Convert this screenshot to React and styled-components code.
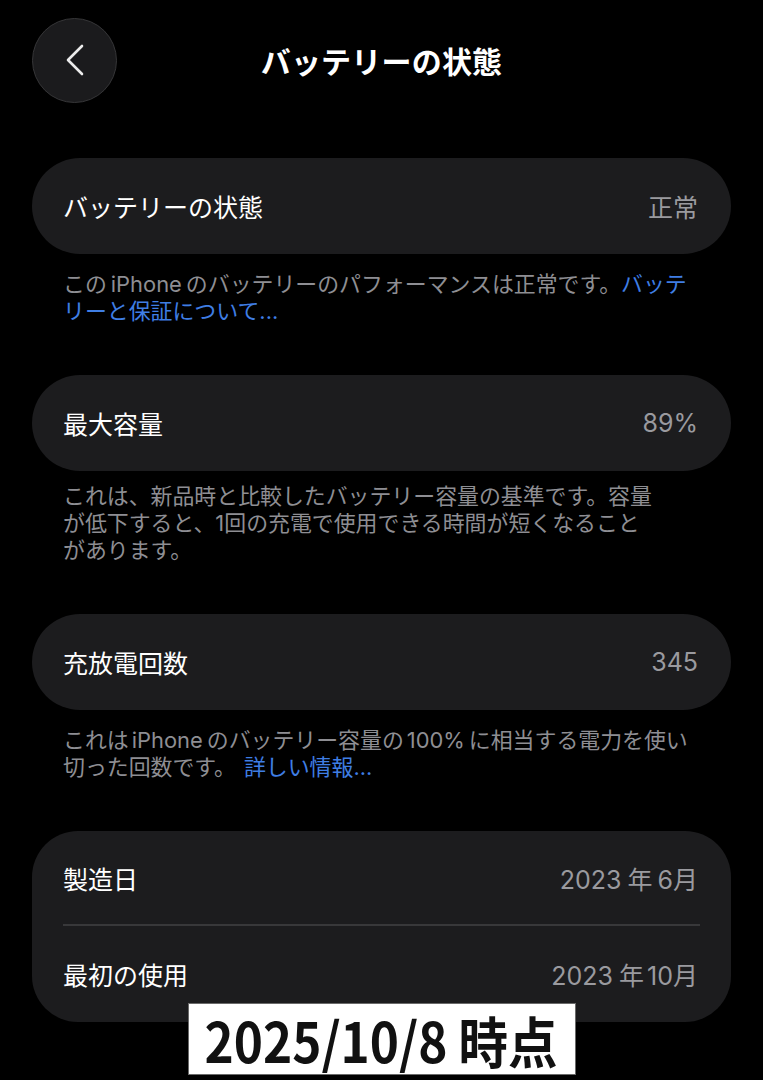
import React from "react";
import styled, { createGlobalStyle } from "styled-components";

const GlobalStyle = createGlobalStyle`
  html, body {
    margin: 0;
    padding: 0;
    background: #000;
  }
  body {
    font-family: "Inter", "Noto Sans CJK JP", sans-serif;
    -webkit-font-smoothing: antialiased;
  }
  * { box-sizing: border-box; }
`;

const Page = styled.div`
  width: 763px;
  min-height: 1080px;
  background: #000;
  padding: 17px 32px 0;
  display: flex;
  flex-direction: column;
`;

const Header = styled.header`
  display: grid;
  grid-template-columns: 85px 1fr 85px;
  align-items: center;
  height: 86px;
  margin-bottom: 55px;
`;

const BackButton = styled.button`
  width: 85px;
  height: 85px;
  border-radius: 50%;
  background: #1b1b1d;
  border: 1.5px solid #363638;
  display: flex;
  align-items: center;
  justify-content: center;
  padding: 0;
  cursor: pointer;
`;

const Title = styled.h1`
  margin: 0;
  text-align: center;
  color: #fff;
  font-family: "Noto Sans CJK JP", sans-serif;
  font-size: 30px;
  font-weight: 700;
  letter-spacing: 0.2px;
`;

const Group = styled.section`
  display: flex;
  flex-direction: column;
  margin-bottom: 50px;
  position: relative;
`;

const Card = styled.div`
  background: #1c1c1e;
  border-radius: ${(p) => (p.$multi ? "46px" : "48px")};
  display: flex;
  flex-direction: column;
  padding: 0 31px;
`;

const Row = styled.div`
  height: ${(p) => p.$h || 96}px;
  display: flex;
  align-items: center;
  justify-content: space-between;
  border-bottom: ${(p) => (p.$divider ? "2px solid #38383a" : "none")};
`;

const Label = styled.span`
  color: #fff;
  font-size: 25px;
  font-weight: 400;
  font-family: "Noto Sans CJK JP", sans-serif;
`;

const Value = styled.span`
  color: #9a9a9f;
  font-size: 25px;
  font-weight: 400;
  margin-right: 2px;
`;

const Footnote = styled.p`
  margin: ${(p) => (p.$tight ? "12px" : "17px")} 0 0;
  padding: 0 31px;
  color: #8e8e93;
  font-size: 21.9px;
  line-height: 27px;
  white-space: nowrap;
`;

const Link = styled.span`
  color: #3f7ee4;
`;

const Gap = styled.span`
  display: inline-block;
  width: ${(p) => p.$w || 5}px;
`;

const Stamp = styled.div`
  position: absolute;
  left: 50%;
  top: 172px;
  transform: translateX(-50%);
  width: 388px;
  height: 72px;
  background: #fff;
  border: 1px solid #6a6a6a;
  display: flex;
  align-items: center;
  justify-content: center;
`;

const StampText = styled.span`
  display: inline-block;
  color: #111;
  font-family: "Noto Sans CJK JP", sans-serif;
  font-weight: 700;
  font-size: 55px;
  line-height: 60px;
  white-space: nowrap;
  transform: scaleX(0.9);
`;

const Chevron = () => (
  <svg width="24" height="32" viewBox="0 0 24 32" fill="none">
    <path
      d="M19 2 L5 16 L19 30"
      stroke="#ececec"
      strokeWidth="2.6"
      strokeLinecap="round"
      strokeLinejoin="round"
    />
  </svg>
);

export default function App() {
  return (
    <>
      <GlobalStyle />
      <Page>
        <Header>
          <BackButton aria-label="戻る">
            <Chevron />
          </BackButton>
          <Title>バッテリーの状態</Title>
          <span />
        </Header>

        <Group>
          <Card>
            <Row>
              <Label>バッテリーの状態</Label>
              <Value>正常</Value>
            </Row>
          </Card>
          <Footnote>
            この<Gap $w={4} />iPhone<Gap $w={4} />のバッテリーのパフォーマンスは正常です。<Link>バッテ</Link>
            <br />
            <Link>リーと保証について...</Link>
          </Footnote>
        </Group>

        <Group>
          <Card>
            <Row>
              <Label>最大容量</Label>
              <Value>89%</Value>
            </Row>
          </Card>
          <Footnote $tight>
            これは、新品時と比較したバッテリー容量の基準です。容量
            <br />
            が低下すると、1回の充電で使用できる時間が短くなること
            <br />
            があります。
          </Footnote>
        </Group>

        <Group>
          <Card>
            <Row>
              <Label>充放電回数</Label>
              <Value>345</Value>
            </Row>
          </Card>
          <Footnote>
            これは<Gap $w={3} />iPhone<Gap $w={4} />のバッテリー容量の<Gap $w={3} />100%<Gap $w={4} />に相当する電力を使い
            <br />
            切った回数です。<Gap $w={8} />
            <Link>詳しい情報...</Link>
          </Footnote>
        </Group>

        <Group>
          <Card $multi>
            <Row $h={95} $divider>
              <Label>製造日</Label>
              <Value>
                2023<Gap $w={6} />年<Gap $w={5} />6月
              </Value>
            </Row>
            <Row $h={96}>
              <Label>最初の使用</Label>
              <Value>
                2023<Gap $w={6} />年<Gap $w={3} />10月
              </Value>
            </Row>
          </Card>
          <Stamp>
            <StampText>2025/10/8 時点</StampText>
          </Stamp>
        </Group>
      </Page>
    </>
  );
}
